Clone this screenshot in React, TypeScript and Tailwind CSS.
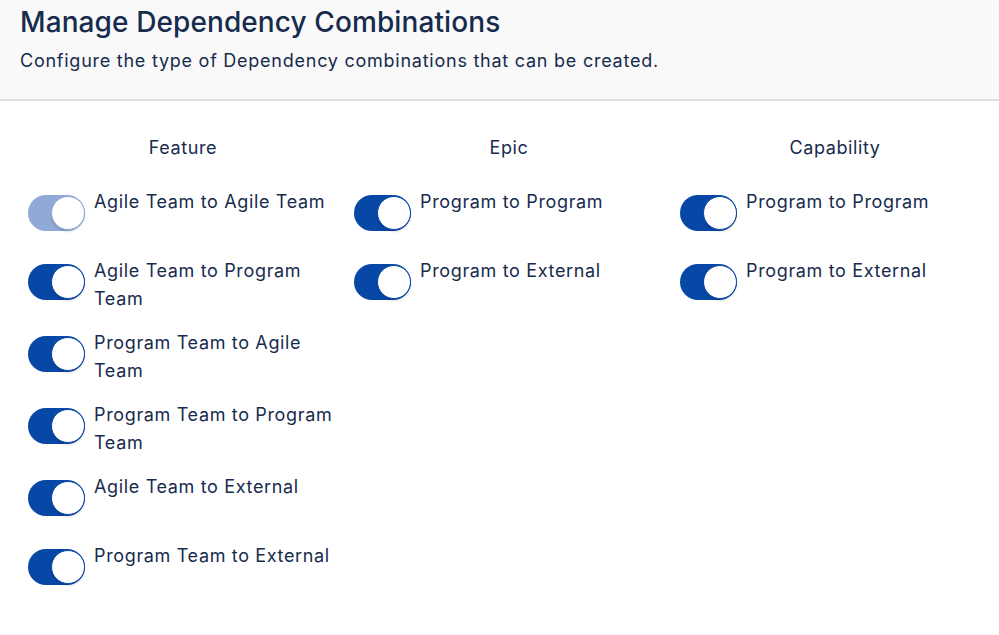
import React, { useState } from 'react';

type Item = { id: string; label: string; on: boolean; disabled?: boolean };

const initial: Record<string, Item[]> = {
  Feature: [
    { id: 'f1', label: 'Agile Team to Agile Team', on: true, disabled: true },
    { id: 'f2', label: 'Agile Team to Program Team', on: true },
    { id: 'f3', label: 'Program Team to Agile Team', on: true },
    { id: 'f4', label: 'Program Team to Program Team', on: true },
    { id: 'f5', label: 'Agile Team to External', on: true },
    { id: 'f6', label: 'Program Team to External', on: true },
  ],
  Epic: [
    { id: 'e1', label: 'Program to Program', on: true },
    { id: 'e2', label: 'Program to External', on: true },
  ],
  Capability: [
    { id: 'c1', label: 'Program to Program', on: true },
    { id: 'c2', label: 'Program to External', on: true },
  ],
};

const Toggle: React.FC<{ on: boolean; disabled?: boolean; onClick: () => void }> = ({ on, disabled, onClick }) => (
  <button
    onClick={onClick}
    disabled={disabled}
    className={`relative shrink-0 w-[57px] h-[36px] rounded-full mt-[7px] mb-[10px] ${
      disabled ? 'bg-[#91a9d6]' : on ? 'bg-[#0747a6]' : 'bg-[#c1c7d0]'
    }`}
  >
    <span
      className={`absolute top-[1px] w-[34px] h-[34px] rounded-full bg-white border shadow-[0_2px_2px_rgba(0,0,0,0.12)] ${
        disabled ? 'border-[#91a9d6]' : 'border-[#0747a6]'
      } ${on ? 'right-[0px]' : 'left-[0px]'}`}
    />
  </button>
);

const App: React.FC = () => {
  const [groups, setGroups] = useState(initial);

  const flip = (group: string, id: string) => {
    setGroups((g) => ({
      ...g,
      [group]: g[group].map((it) => (it.id === id ? { ...it, on: !it.on } : it)),
    }));
  };

  return (
    <div className="min-h-screen bg-white text-[#172b4d] font-['Inter','Liberation_Sans',sans-serif]">
      <header className="bg-[#f9f9fa] border-b-2 border-[#dfdfe0] px-5 pt-[3px] h-[101px]">
        <h1 className="text-[28px] font-medium leading-[38px] tracking-[0.1px]">Manage Dependency Combinations</h1>
        <p className="text-[18px] leading-[24px] mt-[8px] tracking-[0.75px]">
          Configure the type of Dependency combinations that can be created.
        </p>
      </header>

      <main className="pl-5 pt-[33px] grid grid-cols-[326px_326px_326px]">
        {Object.keys(groups).map((name) => (
          <section key={name}>
            <h2 className="text-center text-[18px] leading-[28px] mb-[26px] tracking-[0.6px]">{name}</h2>
            <div className="flex flex-col gap-4">
              {groups[name].map((it) => (
                <div key={it.id} className="flex items-start gap-[9px] pl-2 pr-2">
                  <Toggle on={it.on} disabled={it.disabled} onClick={() => flip(name, it.id)} />
                  <span className="text-[18px] leading-[28px] tracking-[0.65px]">{it.label}</span>
                </div>
              ))}
            </div>
          </section>
        ))}
      </main>
    </div>
  );
};

export default App;
